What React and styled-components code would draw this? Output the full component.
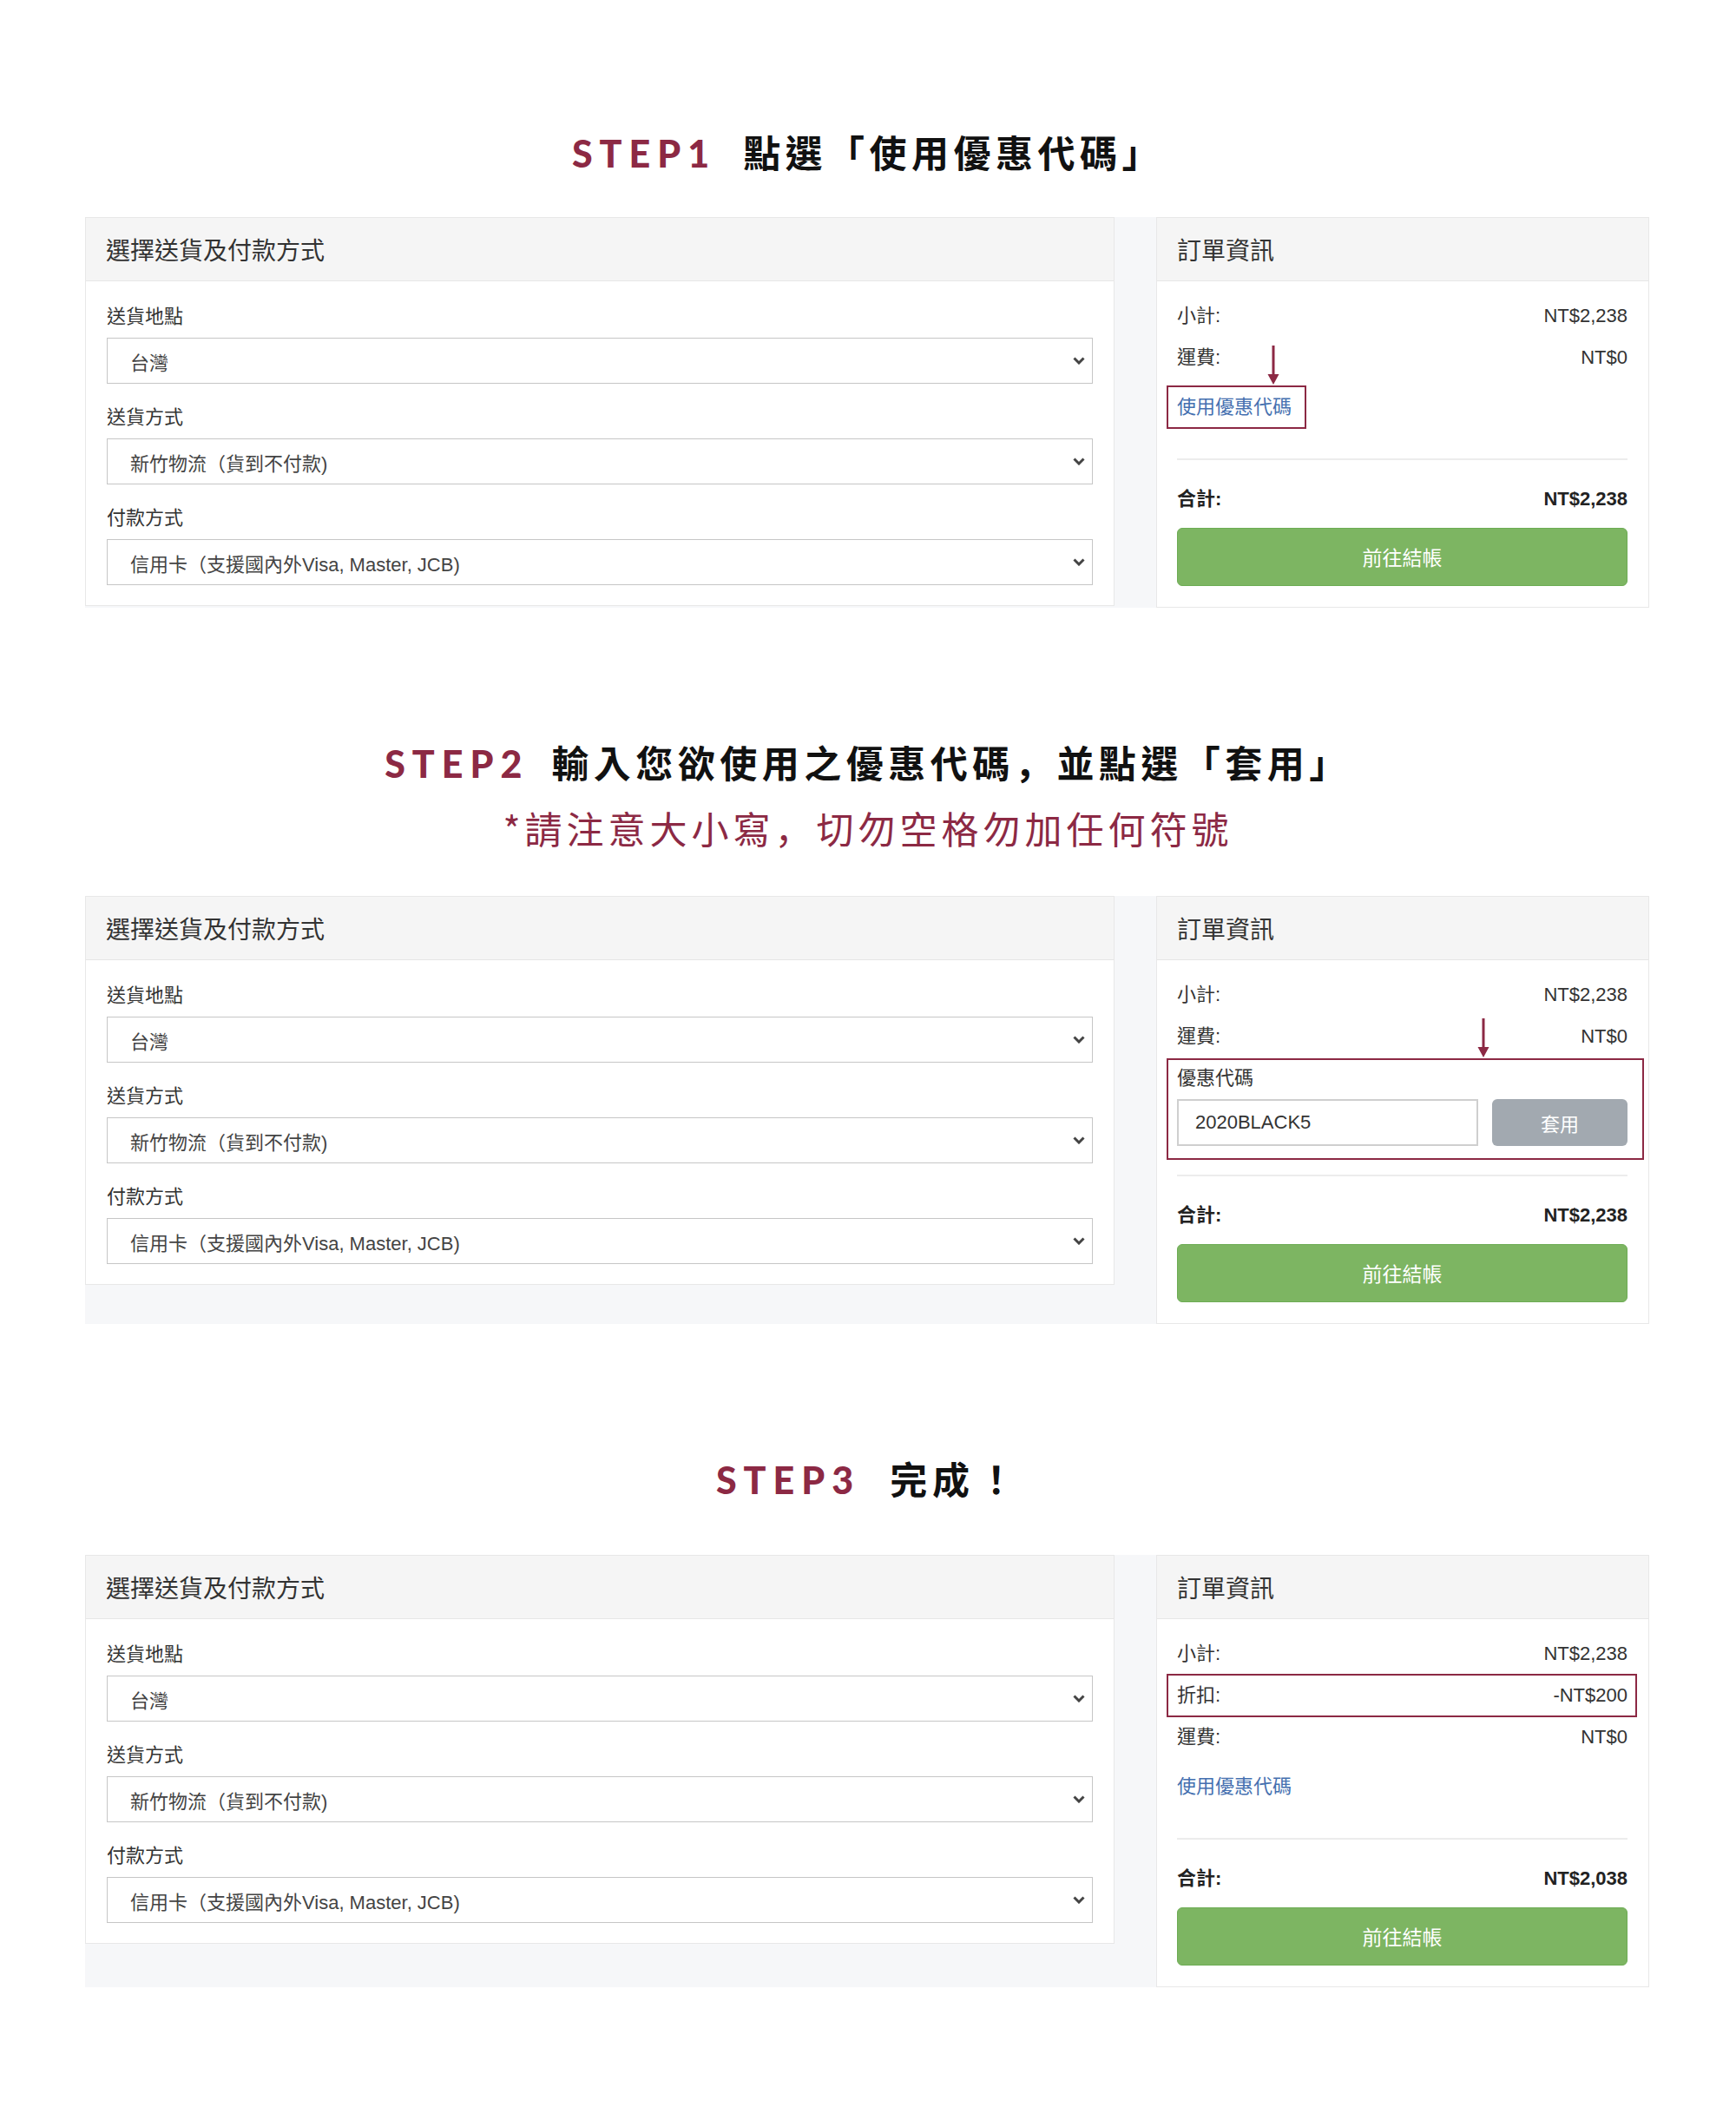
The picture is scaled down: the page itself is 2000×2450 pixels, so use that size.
import React from 'react';
import styled, { createGlobalStyle } from 'styled-components';

const maroon = '#8c2944';

const GlobalStyle = createGlobalStyle`
  body {
    margin: 0;
    background: #fff;
    font-family: "Liberation Sans", "Noto Sans CJK TC", sans-serif;
    color: #333;
  }
`;

const Page = styled.div`
  width: 2000px;
  min-height: 2450px;
  padding-top: 144px;
  box-sizing: border-box;
`;

const Heading = styled.h2`
  margin: ${p => p.$top || 0}px 0 0;
  height: 60px;
  line-height: 60px;
  text-align: center;
  font-size: 43px;
  font-weight: 700;
  color: #111;
  white-space: nowrap;
`;

const StepTag = styled.span`
  font-family: Lato, "Liberation Sans", sans-serif;
  font-weight: 900;
  color: ${maroon};
  letter-spacing: 8px;
  margin-right: ${p => p.$gap || 26}px;
`;

const StepText = styled.span`
  font-family: "Noto Sans CJK TC", sans-serif;
  font-weight: 700;
  letter-spacing: ${p => p.$spacing || 6}px;
`;

// full-width comma sitting low-left, as in the reference font
const Comma = styled.span`
  font-family: "Noto Sans CJK SC", sans-serif;
`;

const Bang = styled.span`
  margin-left: 3px;
`;

const Note = styled.p`
  margin: 16px 0 0;
  height: 60px;
  line-height: 60px;
  text-align: center;
  font-family: "Noto Sans CJK TC", sans-serif;
  font-size: 43px;
  font-weight: 400;
  letter-spacing: 5px;
  color: ${maroon};
`;

const Board = styled.div`
  margin: ${p => p.$top}px 100px 0 98px;
  display: flex;
  align-items: flex-start;
  gap: 48px;
  background: #f6f7f9;
`;

const Panel = styled.div`
  box-sizing: border-box;
  background: #fff;
  border: 1px solid #e8e8e8;
  width: ${p => (p.$wide ? '1186px' : 'auto')};
  flex: ${p => (p.$wide ? 'none' : 1)};
`;

const PanelHead = styled.div`
  box-sizing: border-box;
  height: 73px;
  padding: 0 23px;
  display: flex;
  align-items: center;
  background: #f5f5f5;
  border-bottom: 1px solid #e6e6e6;
  font-family: "Noto Sans CJK TC", sans-serif;
  font-size: 28px;
  color: #333;
`;

const FormBody = styled.div`
  padding: 26px 24px 23px;
  display: flex;
  flex-direction: column;
  gap: 24px;
`;

const Field = styled.div`
  display: flex;
  flex-direction: column;
`;

const Label = styled.div`
  font-size: 22px;
  line-height: 29px;
  margin-bottom: 10px;
  color: #333;
`;

const SelectBox = styled.div`
  box-sizing: border-box;
  height: 53px;
  border: 1px solid #c6c6c6;
  padding: 0 8px 0 26px;
  display: flex;
  align-items: center;
  justify-content: space-between;
  font-size: 22px;
  color: #444;
`;

const Chevron = () => (
  <svg width="14" height="9" viewBox="0 0 14 9">
    <path d="M1.5 1.5 L7 7 L12.5 1.5" fill="none" stroke="#444" strokeWidth="3" />
  </svg>
);

const OrderBody = styled.div`
  padding: 25px 24px 24px 23px;
  display: flex;
  flex-direction: column;
`;

const Line = styled.div`
  display: flex;
  justify-content: space-between;
  font-size: 22px;
  line-height: 30px;
  font-weight: ${p => (p.$bold ? 700 : 400)};
  color: ${p => (p.$bold ? '#222' : '#333')};
  margin-top: ${p => p.$gap || 0}px;
`;

const CouponLink = styled.span`
  display: inline-block;
  font-size: 22px;
  line-height: 30px;
  color: #4570b0;
`;

const Marked = styled.div`
  position: relative;
  align-self: ${p => (p.$inline ? 'flex-start' : 'stretch')};
  margin-top: ${p => p.$gap || 0}px;
`;

const Frame = styled.span`
  position: absolute;
  top: ${p => p.$t}px;
  right: ${p => p.$r}px;
  bottom: ${p => p.$b}px;
  left: ${p => p.$l}px;
  border: 2px solid ${maroon};
  pointer-events: none;
`;

const ArrowMark = styled.span`
  position: absolute;
  left: ${p => p.$x - 8}px;
  bottom: calc(100% + 2px);
  line-height: 0;
`;

const Arrow = () => (
  <svg width="16" height="46" viewBox="0 0 16 46">
    <line x1="8" y1="0" x2="8" y2="36" stroke={maroon} strokeWidth="3" />
    <polygon points="1.5,33 14.5,33 8,45" fill={maroon} />
  </svg>
);

const Divider = styled.div`
  height: 2px;
  background: #ececec;
  margin-top: ${p => p.$gap}px;
`;

const CheckoutButton = styled.div`
  box-sizing: border-box;
  margin-top: 18px;
  height: 67px;
  padding-bottom: 2px;
  border: 1px solid #6dac54;
  border-radius: 6px;
  background: #7db562;
  color: #fff;
  font-size: 23px;
  display: flex;
  align-items: center;
  justify-content: center;
`;

const CouponForm = styled.div`
  display: flex;
  flex-direction: column;
`;

const CouponRow = styled.div`
  display: flex;
  gap: 16px;
  margin-top: 9px;
`;

const CodeInput = styled.div`
  box-sizing: border-box;
  flex: 1;
  height: 54px;
  border: 2px solid #cfcfcf;
  padding: 0 19px;
  display: flex;
  align-items: center;
  font-size: 22px;
  color: #333;
`;

const ApplyButton = styled.div`
  width: 156px;
  height: 54px;
  border-radius: 6px;
  background: #a2a9b0;
  color: #fff;
  font-size: 22px;
  display: flex;
  align-items: center;
  justify-content: center;
`;

const fields = [
  { label: '送貨地點', value: '台灣' },
  { label: '送貨方式', value: '新竹物流（貨到不付款)' },
  { label: '付款方式', value: '信用卡（支援國內外Visa, Master, JCB)' },
];

const ShippingPanel = () => (
  <Panel $wide>
    <PanelHead>選擇送貨及付款方式</PanelHead>
    <FormBody>
      {fields.map(f => (
        <Field key={f.label}>
          <Label>{f.label}</Label>
          <SelectBox>
            <span>{f.value}</span>
            <Chevron />
          </SelectBox>
        </Field>
      ))}
    </FormBody>
  </Panel>
);

const OrderPanel = ({ step }) => (
  <Panel>
    <PanelHead>訂單資訊</PanelHead>
    <OrderBody>
      <Line>
        <span>小計:</span>
        <span>NT$2,238</span>
      </Line>
      {step === 3 && (
        <Marked $gap={18}>
          <Line>
            <span>折扣:</span>
            <span>-NT$200</span>
          </Line>
          <Frame $t={-10} $r={-11} $b={-10} $l={-12} />
        </Marked>
      )}
      <Line $gap={18}>
        <span>運費:</span>
        <span>NT$0</span>
      </Line>

      {step === 2 ? (
        <Marked $gap={18}>
          <CouponForm>
            <Line>
              <span>優惠代碼</span>
            </Line>
            <CouponRow>
              <CodeInput>2020BLACK5</CodeInput>
              <ApplyButton>套用</ApplyButton>
            </CouponRow>
          </CouponForm>
          <Frame $t={-8} $r={-19} $b={-16} $l={-12}>
            <ArrowMark $x={363}>
              <Arrow />
            </ArrowMark>
          </Frame>
        </Marked>
      ) : (
        <Marked $inline $gap={27}>
          <CouponLink>使用優惠代碼</CouponLink>
          {step === 1 && (
            <Frame $t={-10} $r={-17} $b={-10} $l={-12}>
              <ArrowMark $x={121}>
                <Arrow />
              </ArrowMark>
            </Frame>
          )}
        </Marked>
      )}

      <Divider $gap={step === 2 ? 33 : 44} />
      <Line $bold $gap={30}>
        <span>合計:</span>
        <span>{step === 3 ? 'NT$2,038' : 'NT$2,238'}</span>
      </Line>
      <CheckoutButton>前往結帳</CheckoutButton>
    </OrderBody>
  </Panel>
);

const App = () => (
  <Page>
    <GlobalStyle />

    <Heading>
      <StepTag $gap={31}>STEP1</StepTag>
      <StepText $spacing={5.5}>點選「使用優惠代碼」</StepText>
    </Heading>
    <Board $top={46}>
      <ShippingPanel />
      <OrderPanel step={1} />
    </Board>

    <Heading $top={147}>
      <StepTag>STEP2</StepTag>
      <StepText $spacing={5.5}>
        輸入您欲使用之優惠代碼<Comma>，</Comma>並點選「套用」
      </StepText>
    </Heading>
    <Note>
      *請注意大小寫<Comma>，</Comma>切勿空格勿加任何符號
    </Note>
    <Board $top={49}>
      <ShippingPanel />
      <OrderPanel step={2} />
    </Board>

    <Heading $top={147}>
      <StepTag $gap={34}>STEP3</StepTag>
      <StepText>
        完成<Bang>！</Bang>
      </StepText>
    </Heading>
    <Board $top={59}>
      <ShippingPanel />
      <OrderPanel step={3} />
    </Board>
  </Page>
);

export default App;
